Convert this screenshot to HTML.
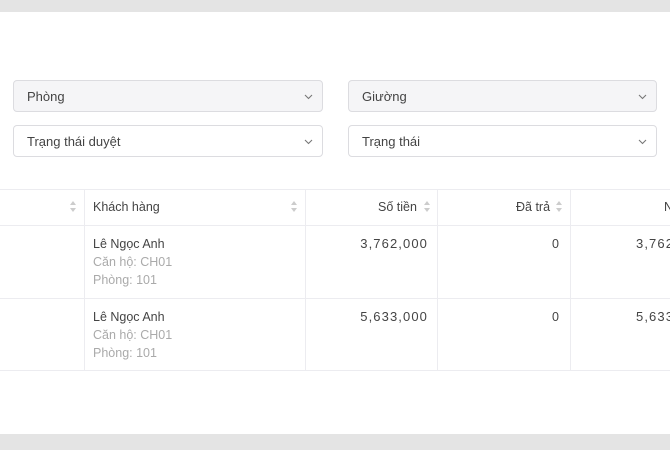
<!DOCTYPE html>
<html><head><meta charset="utf-8"><style>
*{margin:0;padding:0;box-sizing:border-box}
body{width:670px;height:450px;background:#e4e4e4;font-family:"Liberation Sans",sans-serif;position:relative;overflow:hidden;color:#333}
.card{position:absolute;left:0;top:12px;width:670px;height:422px;background:#fff}
.sel{position:absolute;height:32px;border:1px solid #dcdce0;border-radius:4px;font-size:13px;color:#444;padding:8px 13px;line-height:15px}
.sel svg{position:absolute;right:9px;top:13px}
.g{background:#f5f5f7}
.tb{position:absolute;left:0;top:189px;width:670px;height:182px;border-top:1px solid #ececf0;border-bottom:1px solid #ececf0}
.h{position:absolute;left:0;top:189px;height:37px;width:670px;border-bottom:1px solid #ececf0}
.v{position:absolute;top:189px;height:182px;width:1px;background:#ececf0}
.r{position:absolute;left:0;top:298px;width:670px;height:1px;background:#ececf0}
.t{position:absolute;font-size:12.5px;color:#444;white-space:nowrap}
.n{letter-spacing:1.1px;font-size:13px}
.s{color:#aaa}
.ar{position:absolute;width:6px}
</style></head><body>
<div class="card"></div>
<div class="sel g" style="left:13px;top:80px;width:310px">Phòng<svg width="9" height="6"><path d="M1 1l3.5 3.5 3.5-3.5" fill="none" stroke="#777" stroke-width="1.1"/></svg></div>
<div class="sel g" style="left:348px;top:80px;width:309px">Giường<svg width="9" height="6"><path d="M1 1l3.5 3.5 3.5-3.5" fill="none" stroke="#777" stroke-width="1.1"/></svg></div>
<div class="sel" style="left:13px;top:125px;width:310px">Trạng thái duyệt<svg width="9" height="6"><path d="M1 1l3.5 3.5 3.5-3.5" fill="none" stroke="#777" stroke-width="1.1"/></svg></div>
<div class="sel" style="left:348px;top:125px;width:309px">Trạng thái<svg width="9" height="6"><path d="M1 1l3.5 3.5 3.5-3.5" fill="none" stroke="#777" stroke-width="1.1"/></svg></div>
<div class="tb"></div><div class="h"></div><div class="r"></div>
<div class="v" style="left:84px"></div><div class="v" style="left:305px"></div><div class="v" style="left:437px"></div><div class="v" style="left:570px"></div>
<div class="t" style="left:93px;top:200px">Khách hàng</div>
<div class="t" style="left:378px;top:200px">Số tiền</div>
<div class="t" style="left:516px;top:200px">Đã trả</div>
<div class="t" style="left:664px;top:200px">N</div>
<svg class="ar" style="left:70px;top:201px" height="11"><path d="M0 4l3-4 3 4zM0 7l3 4 3-4z" fill="#ccc"/></svg>
<svg class="ar" style="left:291px;top:201px" height="11"><path d="M0 4l3-4 3 4zM0 7l3 4 3-4z" fill="#ccc"/></svg>
<svg class="ar" style="left:424px;top:201px" height="11"><path d="M0 4l3-4 3 4zM0 7l3 4 3-4z" fill="#ccc"/></svg>
<svg class="ar" style="left:556px;top:201px" height="11"><path d="M0 4l3-4 3 4zM0 7l3 4 3-4z" fill="#ccc"/></svg>
<div class="t" style="left:93px;top:237px">Lê Ngọc Anh</div>
<div class="t s" style="left:93px;top:255px">Căn hộ: CH01</div>
<div class="t s" style="left:93px;top:273px">Phòng: 101</div>
<div class="t n" style="right:242px;top:236px">3,762,000</div>
<div class="t" style="left:552px;top:237px">0</div>
<div class="t n" style="left:636px;top:236px">3,762,</div>
<div class="t" style="left:93px;top:310px">Lê Ngọc Anh</div>
<div class="t s" style="left:93px;top:328px">Căn hộ: CH01</div>
<div class="t s" style="left:93px;top:346px">Phòng: 101</div>
<div class="t n" style="right:242px;top:309px">5,633,000</div>
<div class="t" style="left:552px;top:310px">0</div>
<div class="t n" style="left:636px;top:309px">5,633,</div>
</body></html>
